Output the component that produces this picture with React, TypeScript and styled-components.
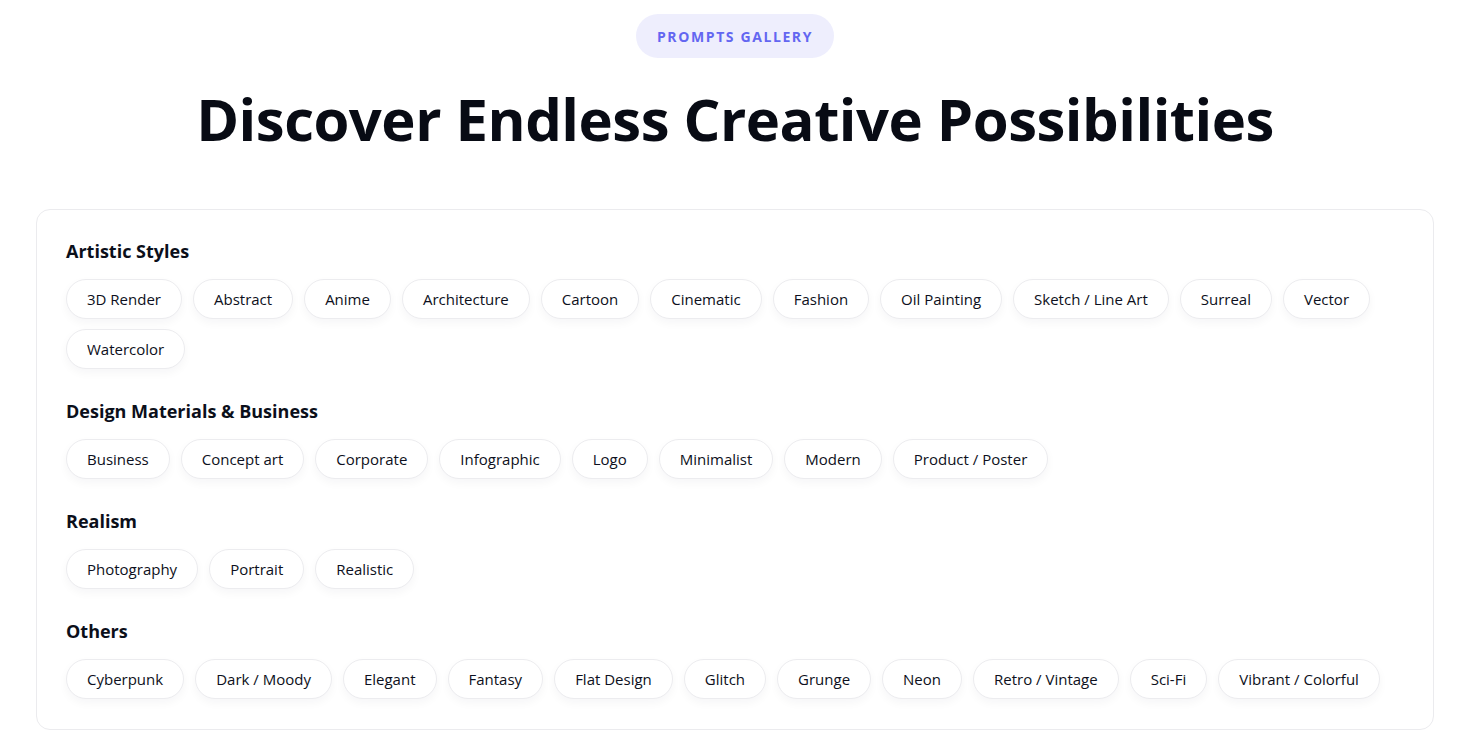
import React from 'react'
import styled, { createGlobalStyle } from 'styled-components'

const GlobalStyle = createGlobalStyle`
  html, body {
    margin: 0;
    padding: 0;
    background: #ffffff;
  }
  body {
    font-family: 'Open Sans', 'Noto Sans', 'Liberation Sans', sans-serif;
    color: #0b0f1a;
  }
`

const Page = styled.main`
  display: flex;
  flex-direction: column;
  align-items: center;
  padding: 14px 41px 0 36px;
  height: 731px;
  box-sizing: border-box;
  overflow: hidden;
`

const Badge = styled.span`
  display: inline-flex;
  align-items: center;
  justify-content: center;
  width: 198px;
  height: 44px;
  border-radius: 999px;
  background: #eeeefd;
  color: #6366f1;
  font-size: 14px;
  font-weight: 700;
  letter-spacing: 1.6px;
`

const Title = styled.h1`
  margin: 25px 0 0 0;
  font-size: 58px;
  line-height: 72px;
  font-weight: 700;
  letter-spacing: -0.5px;
  color: #080b14;
`

const Card = styled.section`
  align-self: stretch;
  margin-top: 54px;
  border: 1px solid #ebebee;
  border-radius: 14px;
  padding: 29px 29px 30px 29px;
  display: flex;
  flex-direction: column;
  gap: 30px;
`

const Group = styled.div`
  display: flex;
  flex-direction: column;
  gap: 16px;
`

const GroupTitle = styled.h2`
  margin: 0;
  font-size: 18px;
  line-height: 24px;
  font-weight: 700;
  color: #0b0f1a;
`

const ChipRow = styled.div`
  display: flex;
  flex-wrap: wrap;
  gap: 10px 11px;
`

const Chip = styled.button`
  height: 40px;
  padding: 0 20px;
  border: 1px solid #ececef;
  border-radius: 999px;
  background: #ffffff;
  box-shadow: 0 4px 10px rgba(15, 23, 42, 0.04);
  font-family: inherit;
  font-size: 15px;
  color: #0d1020;
  cursor: pointer;
`

const groups: { title: string; tags: string[] }[] = [
  {
    title: 'Artistic Styles',
    tags: [
      '3D Render', 'Abstract', 'Anime', 'Architecture', 'Cartoon', 'Cinematic',
      'Fashion', 'Oil Painting', 'Sketch / Line Art', 'Surreal', 'Vector', 'Watercolor',
    ],
  },
  {
    title: 'Design Materials & Business',
    tags: ['Business', 'Concept art', 'Corporate', 'Infographic', 'Logo', 'Minimalist', 'Modern', 'Product / Poster'],
  },
  { title: 'Realism', tags: ['Photography', 'Portrait', 'Realistic'] },
  {
    title: 'Others',
    tags: [
      'Cyberpunk', 'Dark / Moody', 'Elegant', 'Fantasy', 'Flat Design', 'Glitch',
      'Grunge', 'Neon', 'Retro / Vintage', 'Sci-Fi', 'Vibrant / Colorful',
    ],
  },
]

export default function App() {
  return (
    <>
      <GlobalStyle />
      <Page>
        <Badge>PROMPTS GALLERY</Badge>
        <Title>Discover Endless Creative Possibilities</Title>
        <Card>
          {groups.map(g => (
            <Group key={g.title}>
              <GroupTitle>{g.title}</GroupTitle>
              <ChipRow>
                {g.tags.map(t => (
                  <Chip key={t}>{t}</Chip>
                ))}
              </ChipRow>
            </Group>
          ))}
        </Card>
      </Page>
    </>
  )
}
